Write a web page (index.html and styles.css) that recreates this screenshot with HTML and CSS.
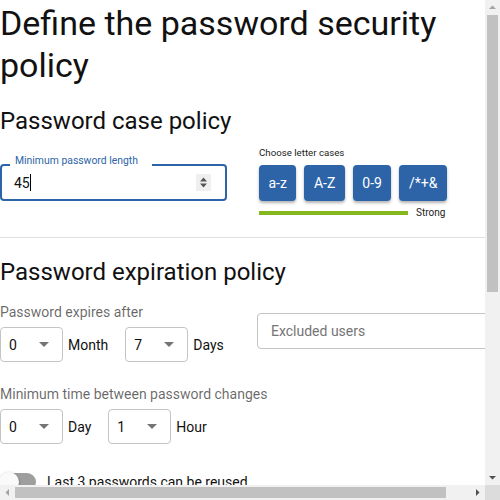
FILE: index.html
```html
<!DOCTYPE html>
<html lang="en">
<head>
<meta charset="utf-8">
<title>Password security policy</title>
<link rel="stylesheet" href="styles.css">
</head>
<body>
<div class="page">
  <h1 class="title">Define the password security policy</h1>

  <h2 class="section-title">Password case policy</h2>
  <div class="case-row">
    <div class="field">
      <span class="field-label">Minimum password length</span>
      <span class="field-value">45</span><span class="caret"></span>
      <span class="spinner">
        <svg width="15" height="17" viewBox="0 0 15 17"><path d="M4 7.5 L7.5 3.5 L11 7.5 Z" fill="#555"/><path d="M4 9.5 L7.5 13.5 L11 9.5 Z" fill="#555"/></svg>
      </span>
    </div>
    <div class="cases">
      <div class="cases-label">Choose letter cases</div>
      <div class="case-buttons">
        <span class="case-btn">a-z</span>
        <span class="case-btn">A-Z</span>
        <span class="case-btn">0-9</span>
        <span class="case-btn">/*+&amp;</span>
      </div>
      <div class="strength">
        <span class="strength-bar"></span>
        <span class="strength-text">Strong</span>
      </div>
    </div>
  </div>

  <hr class="divider">

  <h2 class="section-title second">Password expiration policy</h2>
  <div class="expire-row">
    <div class="expire-left">
      <div class="label">Password expires after</div>
      <div class="select-row">
        <div class="select-group">
          <div class="select"><span>0</span><svg width="10" height="5" viewBox="0 0 10 5"><path d="M0 0 L5 5 L10 0 Z" fill="#757575"/></svg></div>
          <span class="unit">Month</span>
        </div>
        <div class="select-group">
          <div class="select"><span>7</span><svg width="10" height="5" viewBox="0 0 10 5"><path d="M0 0 L5 5 L10 0 Z" fill="#757575"/></svg></div>
          <span class="unit">Days</span>
        </div>
      </div>
      <div class="label second-label">Minimum time between password changes</div>
      <div class="select-row">
        <div class="select-group">
          <div class="select"><span>0</span><svg width="10" height="5" viewBox="0 0 10 5"><path d="M0 0 L5 5 L10 0 Z" fill="#757575"/></svg></div>
          <span class="unit">Day</span>
        </div>
        <div class="select-group">
          <div class="select"><span>1</span><svg width="10" height="5" viewBox="0 0 10 5"><path d="M0 0 L5 5 L10 0 Z" fill="#757575"/></svg></div>
          <span class="unit">Hour</span>
        </div>
      </div>
    </div>
    <div class="excluded">Excluded users</div>
  </div>

  <div class="switch-row">
    <span class="switch"><span class="switch-thumb"></span></span>
    <span class="switch-text">Last 3 passwords can be reused</span>
  </div>
</div>

<div class="scrollbar scrollbar-v">
  <svg class="sb-arrow" width="15" height="15" viewBox="0 0 15 15"><path d="M4 9 L7.5 5.5 L11 9 Z" fill="#a3a3a3"/></svg>
  <div class="sb-track-v"><div class="sb-thumb-v"></div></div>
  <svg class="sb-arrow" width="15" height="15" viewBox="0 0 15 15"><path d="M4 6 L7.5 9.5 L11 6 Z" fill="#505050"/></svg>
</div>
<div class="scrollbar scrollbar-h">
  <svg class="sb-arrow" width="15" height="15" viewBox="0 0 15 15"><path d="M9 4 L5.5 7.5 L9 11 Z" fill="#a3a3a3"/></svg>
  <div class="sb-track-h"><div class="sb-thumb-h"></div></div>
  <svg class="sb-arrow" width="15" height="15" viewBox="0 0 15 15"><path d="M6 4 L9.5 7.5 L6 11 Z" fill="#505050"/></svg>
</div>
<div class="scrollbar-corner"></div>
</body>
</html>
```

FILE: styles.css
```css
html, body {
  margin: 0;
  overflow: hidden;
}

body {
  font-family: Roboto, "Liberation Sans", sans-serif;
  color: rgba(0, 0, 0, 0.87);
  background: #fff;
}

.page {
  width: 512px;
  min-height: 797px;
}

.title {
  margin: 2px 0 0;
  font-size: 34px;
  line-height: 42px;
  font-weight: 400;
  color: #111;
}

.section-title {
  margin: 19px 0 0;
  font-size: 24px;
  line-height: 32px;
  font-weight: 400;
  color: #111;
}

.section-title.second {
  margin-top: 18px;
}

.case-row {
  display: flex;
  margin-top: 10px;
}

.field {
  position: relative;
  margin-top: 17px;
  width: 227px;
  height: 37px;
  box-sizing: border-box;
  border: 2px solid #2c64a7;
  border-radius: 4px;
  display: flex;
  align-items: center;
  padding: 0 14px 0 12px;
  font-size: 14px;
}

.field-label {
  position: absolute;
  top: -10.6px;
  left: 8px;
  padding: 0 14px 0 5px;
  background: #fff;
  font-size: 10.4px;
  line-height: 12px;
  color: #2c64a7;
  white-space: nowrap;
}

.field-value {
  color: #111;
}

.caret {
  width: 1px;
  height: 17px;
  background: #000;
}

.spinner {
  margin-left: auto;
  width: 15px;
  height: 17px;
  background: #efefef;
  display: flex;
}

.cases {
  margin-left: 32px;
}

.cases-label {
  font-size: 9.7px;
  line-height: 12px;
  color: #222;
}

.case-buttons {
  display: flex;
  gap: 8px;
  margin-top: 6px;
}

.case-btn {
  height: 36px;
  padding: 0 9.5px;
  display: flex;
  align-items: center;
  background: #2c64a7;
  color: #fff;
  font-size: 14px;
  border-radius: 4px;
  box-shadow: 0 2px 3px rgba(0, 0, 0, 0.3);
}

.strength {
  display: flex;
  align-items: center;
  gap: 8px;
  margin-top: 6px;
}

.strength-bar {
  width: 149px;
  height: 4px;
  background: #85b81f;
}

.strength-text {
  font-size: 10px;
  line-height: 12px;
  color: #222;
}

.divider {
  margin: 18px 0 0;
  border: 0;
  height: 1px;
  background: #e0e0e0;
}

.expire-row {
  display: flex;
}

.expire-left {
  width: 257px;
  flex: none;
}

.label {
  margin-top: 14px;
  font-size: 14px;
  line-height: 20px;
  color: rgba(0, 0, 0, 0.6);
  white-space: nowrap;
}

.label.second-label {
  margin-top: 22px;
}

.select-row {
  display: flex;
  align-items: center;
  gap: 17px;
  margin-top: 5px;
}

.select-group {
  display: flex;
  align-items: center;
  gap: 5px;
}

.select {
  width: 63px;
  height: 35px;
  box-sizing: border-box;
  border: 1px solid #c4c4c4;
  border-radius: 4px;
  display: flex;
  align-items: center;
  justify-content: space-between;
  padding: 0 13px 0 8px;
  font-size: 14px;
  color: #111;
}

.unit {
  font-size: 14px;
  color: #111;
}

.excluded {
  margin-top: 25px;
  width: 255px;
  height: 36px;
  box-sizing: border-box;
  border: 1px solid #c4c4c4;
  border-radius: 4px;
  padding-left: 13px;
  display: flex;
  align-items: center;
  font-size: 14px;
  color: #757575;
}

.switch-row {
  display: flex;
  align-items: center;
  gap: 11px;
  margin-top: 28px;
  height: 20px;
}

.switch {
  position: relative;
  width: 36px;
  height: 18px;
  border-radius: 9px;
  background: #9e9e9e;
}

.switch-thumb {
  position: absolute;
  left: -1px;
  top: -1px;
  width: 20px;
  height: 20px;
  border-radius: 50%;
  background: #fafafa;
  box-shadow: 0 1px 3px rgba(0, 0, 0, 0.35);
}

.switch-text {
  font-size: 14px;
  color: #111;
}

/* browser scrollbars overlaying the viewport */
.scrollbar {
  position: fixed;
  background: #f1f1f1;
  display: flex;
}

.scrollbar-v {
  top: 0;
  right: 0;
  width: 15px;
  height: 485px;
  flex-direction: column;
}

.scrollbar-h {
  left: 0;
  bottom: 0;
  width: 485px;
  height: 15px;
}

.sb-arrow {
  flex: none;
  display: block;
}

.sb-track-v {
  flex: 1;
  padding: 0 2px;
}

.sb-thumb-v {
  height: 277px;
  background: #c1c1c1;
}

.sb-track-h {
  flex: 1;
  padding: 2px 0;
}

.sb-thumb-h {
  width: 431px;
  height: 100%;
  background: #c1c1c1;
}

.scrollbar-corner {
  position: fixed;
  right: 0;
  bottom: 0;
  width: 15px;
  height: 15px;
  background: #dcdcdc;
}
```
